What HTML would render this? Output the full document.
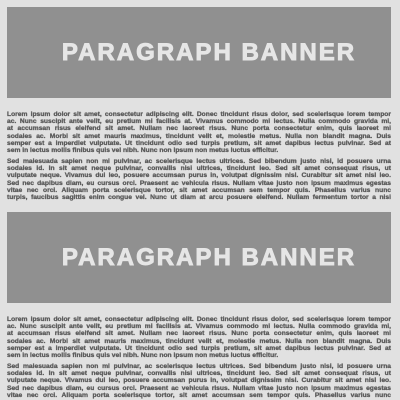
<!DOCTYPE html>
<html><head><style>
html,body{margin:0;padding:0;width:400px;height:400px;overflow:hidden;background:#e1e1e1;}
.b{position:absolute;left:7px;width:384px;height:91px;background:#909090;}
.b span{position:absolute;left:20px;right:0;top:31px;text-align:center;font-family:"Liberation Sans","DejaVu Sans",sans-serif;font-weight:700;font-size:24px;color:#e6e6e6;letter-spacing:2px;line-height:30px;-webkit-text-stroke:0.9px #e6e6e6;}
.p{position:absolute;left:7px;width:384px;font-family:"Liberation Sans",sans-serif;font-weight:700;font-size:6.7px;line-height:7.2px;color:#5a5a5a;-webkit-text-stroke:0.3px #5a5a5a;}
.p div{text-align:justify;text-align-last:justify;white-space:nowrap;height:7.2px;}
.p div.l{text-align-last:left;}
</style></head><body>
<div class="b" style="top:7px"><span>PARAGRAPH BANNER</span></div>
<div class="p" style="top:111px">
<div>Lorem ipsum dolor sit amet, consectetur adipiscing elit. Donec tincidunt risus dolor, sed scelerisque lorem tempor</div>
<div>ac. Nunc suscipit ante velit, eu pretium mi facilisis at. Vivamus commodo mi lectus. Nulla commodo gravida mi,</div>
<div>at accumsan risus eleifend sit amet. Nullam nec laoreet risus. Nunc porta consectetur enim, quis laoreet mi</div>
<div>sodales ac. Morbi sit amet mauris maximus, tincidunt velit et, molestie metus. Nulla non blandit magna. Duis</div>
<div>semper est a imperdiet vulputate. Ut tincidunt odio sed turpis pretium, sit amet dapibus lectus pulvinar. Sed at</div>
<div class="l">sem in lectus mollis finibus quis vel nibh. Nunc non ipsum non metus luctus efficitur.</div>
</div>
<div class="p" style="top:158px">
<div>Sed malesuada sapien non mi pulvinar, ac scelerisque lectus ultrices. Sed bibendum justo nisi, id posuere urna</div>
<div>sodales id. In sit amet neque pulvinar, convallis nisi ultrices, tincidunt leo. Sed sit amet consequat risus, ut</div>
<div>vulputate neque. Vivamus dui leo, posuere accumsan purus in, volutpat dignissim nisl. Curabitur sit amet nisl leo.</div>
<div>Sed nec dapibus diam, eu cursus orci. Praesent ac vehicula risus. Nullam vitae justo non ipsum maximus egestas</div>
<div>vitae nec orci. Aliquam porta scelerisque tortor, sit amet accumsan sem tempor quis. Phasellus varius nunc</div>
<div>turpis, faucibus sagittis enim congue vel. Nunc ut diam at arcu posuere eleifend. Nullam fermentum tortor a nisi</div>
</div>
<div class="b" style="top:212px"><span>PARAGRAPH BANNER</span></div>
<div class="p" style="top:316px">
<div>Lorem ipsum dolor sit amet, consectetur adipiscing elit. Donec tincidunt risus dolor, sed scelerisque lorem tempor</div>
<div>ac. Nunc suscipit ante velit, eu pretium mi facilisis at. Vivamus commodo mi lectus. Nulla commodo gravida mi,</div>
<div>at accumsan risus eleifend sit amet. Nullam nec laoreet risus. Nunc porta consectetur enim, quis laoreet mi</div>
<div>sodales ac. Morbi sit amet mauris maximus, tincidunt velit et, molestie metus. Nulla non blandit magna. Duis</div>
<div>semper est a imperdiet vulputate. Ut tincidunt odio sed turpis pretium, sit amet dapibus lectus pulvinar. Sed at</div>
<div class="l">sem in lectus mollis finibus quis vel nibh. Nunc non ipsum non metus luctus efficitur.</div>
</div>
<div class="p" style="top:363px">
<div>Sed malesuada sapien non mi pulvinar, ac scelerisque lectus ultrices. Sed bibendum justo nisi, id posuere urna</div>
<div>sodales id. In sit amet neque pulvinar, convallis nisi ultrices, tincidunt leo. Sed sit amet consequat risus, ut</div>
<div>vulputate neque. Vivamus dui leo, posuere accumsan purus in, volutpat dignissim nisl. Curabitur sit amet nisl leo.</div>
<div>Sed nec dapibus diam, eu cursus orci. Praesent ac vehicula risus. Nullam vitae justo non ipsum maximus egestas</div>
<div>vitae nec orci. Aliquam porta scelerisque tortor, sit amet accumsan sem tempor quis. Phasellus varius nunc</div>
</div>
</body></html>
